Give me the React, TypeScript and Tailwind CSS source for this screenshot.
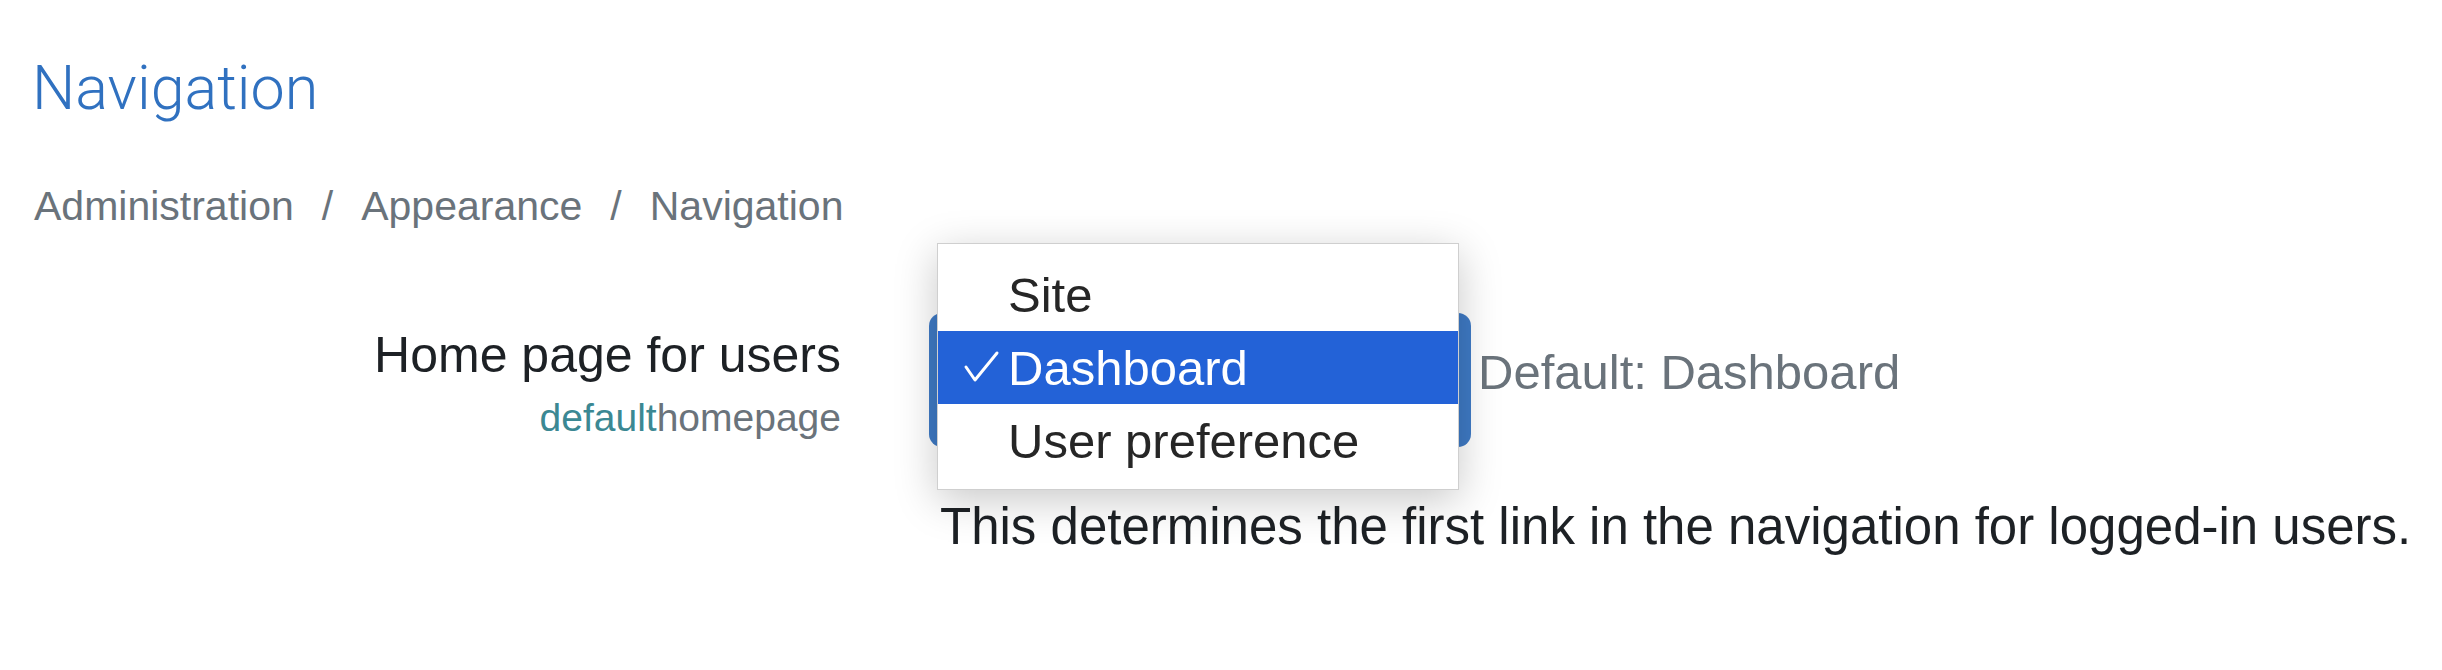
import React from "react";

const sans = "font-['Liberation_Sans','Helvetica_Neue',Arial,sans-serif]";

function Check() {
  return (
    <svg width="40" height="40" viewBox="0 0 40 40" className="block">
      <path d="M4 18 L13 31 L35 4" fill="none" stroke="#ffffff" strokeWidth="3" strokeLinecap="round" strokeLinejoin="round" />
    </svg>
  );
}

export default function App() {
  return (
    <div className={`w-[2442px] h-[670px] bg-white overflow-hidden pl-[34px] pt-[52px] ${sans}`}>
      <h1 className="font-['Roboto',sans-serif] font-light text-[61px] leading-[72px] text-[#3071c0] -ml-[2px]">
        Navigation
      </h1>

      <nav className="mt-[58px] flex items-center text-[41px] leading-[48px] text-[#6a737b]">
        <span>Administration</span>
        <span className="mx-[28px]">/</span>
        <span>Appearance</span>
        <span className="mx-[28px]">/</span>
        <span>Navigation</span>
      </nav>

      <div className="mt-[83px] flex items-start">
        <div className="w-[807px] shrink-0 text-right">
          <div className="mt-[12px] text-[50px] leading-[60px] text-[#1d2125] whitespace-nowrap">Home page for users</div>
          <div className="mt-[10px] text-[39px] leading-[46px] text-[#6a737b] whitespace-nowrap">
            <span className="text-[#3b8893]">default</span>homepage
          </div>
        </div>

        <div className="ml-[88px]">
          <div className="flex items-start">
            <div className="relative w-[542px] h-[134px] rounded-[13px] bg-[#3f7bc6] shrink-0">
              <div className="absolute left-[8px] top-[-70px] w-[522px] h-[247px] bg-white border border-[#cfcfcf] shadow-[0_10px_40px_rgba(0,0,0,0.22)] pt-[14px] text-[49px] text-[#262626]">
                <div className="h-[73px] flex items-center pl-[70px] leading-[60px]">Site</div>
                <div className="h-[73px] flex items-center bg-[#2362d7] text-white leading-[60px]">
                  <div className="w-[70px] pl-[24px] pt-[2px] shrink-0">
                    <Check />
                  </div>
                  <span>Dashboard</span>
                </div>
                <div className="h-[73px] flex items-center pl-[70px] leading-[60px]">User preference</div>
              </div>
            </div>
            <span className="ml-[7px] mt-[29px] text-[49px] leading-[60px] text-[#6a737b] whitespace-nowrap">
              Default: Dashboard
            </span>
          </div>
          <p className="mt-[49px] ml-[11px] text-[51px] leading-[62px] text-[#1d2125] whitespace-nowrap">
            This determines the first link in the navigation for logged-in users.
          </p>
        </div>
      </div>
    </div>
  );
}
